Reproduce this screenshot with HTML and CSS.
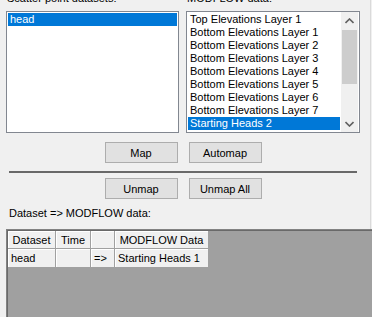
FILE: index.html
```html
<!DOCTYPE html>
<html>
<head>
<meta charset="utf-8">
<link rel="stylesheet" href="styles.css">
</head>
<body>
<div class="win">
  <div class="upper">
    <div class="lists">
      <div class="col col-left">
        <div class="label">Scatter point datasets:</div>
        <div class="listbox">
          <div class="items">
            <div class="item sel">head</div>
          </div>
        </div>
      </div>
      <div class="col col-right">
        <div class="label">MODFLOW data:</div>
        <div class="listbox">
          <div class="items">
            <div class="item">Top Elevations Layer 1</div>
            <div class="item">Bottom Elevations Layer 1</div>
            <div class="item">Bottom Elevations Layer 2</div>
            <div class="item">Bottom Elevations Layer 3</div>
            <div class="item">Bottom Elevations Layer 4</div>
            <div class="item">Bottom Elevations Layer 5</div>
            <div class="item">Bottom Elevations Layer 6</div>
            <div class="item">Bottom Elevations Layer 7</div>
            <div class="item sel">Starting Heads 2</div>
          </div>
          <div class="sb">
            <div class="sb-btn">
              <svg width="9" height="6" viewBox="0 0 9 6"><path d="M0.5 5 L4.5 1 L8.5 5" fill="none" stroke="#606060" stroke-width="1.6"/></svg>
            </div>
            <div class="sb-track"><div class="sb-thumb"></div></div>
            <div class="sb-btn">
              <svg width="9" height="6" viewBox="0 0 9 6"><path d="M0.5 1 L4.5 5 L8.5 1" fill="none" stroke="#606060" stroke-width="1.6"/></svg>
            </div>
          </div>
        </div>
      </div>
    </div>
    <div class="btnrow row1"><button class="btn">Map</button><button class="btn">Automap</button></div>
    <div class="sep"></div>
    <div class="btnrow row2"><button class="btn">Unmap</button><button class="btn">Unmap All</button></div>
    <div class="label2">Dataset =&gt; MODFLOW data:</div>
  </div>
  <div class="grid">
    <table class="tbl">
      <tr class="hdr"><td class="c1">Dataset</td><td class="c2">Time</td><td class="c3"></td><td class="c4">MODFLOW Data</td></tr>
      <tr class="row"><td class="c1">head</td><td class="c2"></td><td class="c3">=&gt;</td><td class="c4">Starting Heads 1</td></tr>
    </table>
  </div>
</div>
</body>
</html>
```
FILE: styles.css
```css
html, body {
  margin: 0;
  padding: 0;
  background: #f0f0f0;
  overflow: hidden;
  width: 372px;
  height: 317px;
}
body {
  font-family: "Liberation Sans", Arial, sans-serif;
  font-size: 11px;
  color: #000;
}
.win {
  margin-top: -8px;
  width: 372px;
}
.upper {
  width: 370px;
  border-right: 1px solid #dadada;
  padding-bottom: 9px;
}
.lists {
  display: flex;
}
.col-left {
  margin-left: 6px;
  width: 173px;
}
.col-right {
  margin-left: 7px;
  width: 174px;
}
.label {
  line-height: 13px;
  height: 13px;
  margin-bottom: 6px;
  margin-left: 1px;
  white-space: nowrap;
}
.listbox {
  box-sizing: border-box;
  height: 122px;
  border: 1px solid #828790;
  background: #fff;
  padding: 1px;
  display: flex;
}
.items {
  flex: 1;
  min-width: 0;
}
.item {
  height: 13px;
  line-height: 13px;
  padding-left: 2px;
  white-space: nowrap;
}
.item.sel {
  background: #0078d7;
  color: #fff;
}
.sb {
  width: 17px;
  display: flex;
  flex-direction: column;
  background: #f0f0f0;
  margin: -1px 0 -1px 1px;
}
.sb-btn {
  height: 17px;
  display: flex;
  align-items: center;
  justify-content: center;
}
.sb-track {
  flex: 1;
}
.sb-thumb {
  height: 54px;
  margin: 1px 1px 0 1px;
  background: #cdcdcd;
}
.btnrow {
  width: 366px;
  display: flex;
  justify-content: center;
  gap: 11px;
}
.row1 {
  margin-top: 9px;
}
.row2 {
  margin-top: 5px;
}
.btn {
  box-sizing: border-box;
  width: 73px;
  height: 21px;
  margin: 0;
  padding: 0;
  background: #e1e1e1;
  border: 1px solid #adadad;
  font-family: "Liberation Sans", Arial, sans-serif;
  font-size: 11px;
  color: #000;
}
.sep {
  margin: 8px 9px 0 9px;
  width: 348px;
  height: 2px;
  background: #696969;
}
.label2 {
  margin-top: 8px;
  margin-left: 9px;
  line-height: 13px;
  height: 13px;
}
.grid {
  margin-left: 6px;
  width: 380px;
  height: 100px;
  background: #a0a0a0;
  border-top: 1px solid #828282;
  border-left: 1px solid #828282;
  box-shadow: inset 1px 1px 0 #696969;
  padding: 1px 0 0 1px;
  box-sizing: border-box;
}
.tbl {
  border-collapse: separate;
  border-spacing: 0;
  table-layout: fixed;
  font-size: 11px;
}
.tbl td {
  background: #f0f0f0;
  border-right: 1px solid #a0a0a0;
  border-bottom: 1px solid #a0a0a0;
  box-shadow: inset 1px 1px 0 #fff;
  padding: 0;
  white-space: nowrap;
  overflow: hidden;
}
.hdr td {
  height: 17px;
  text-align: center;
}
.row td {
  height: 18px;
  padding-left: 3px;
  text-align: left;
}
.c1 { width: 47px; }
.c2 { width: 34px; }
.c3 { width: 23px; }
.c4 { width: 93px; }
.row .c1 { width: 44px; }
.row .c2 { width: 31px; }
.row .c3 { width: 20px; }
.row .c4 { width: 90px; }
```
